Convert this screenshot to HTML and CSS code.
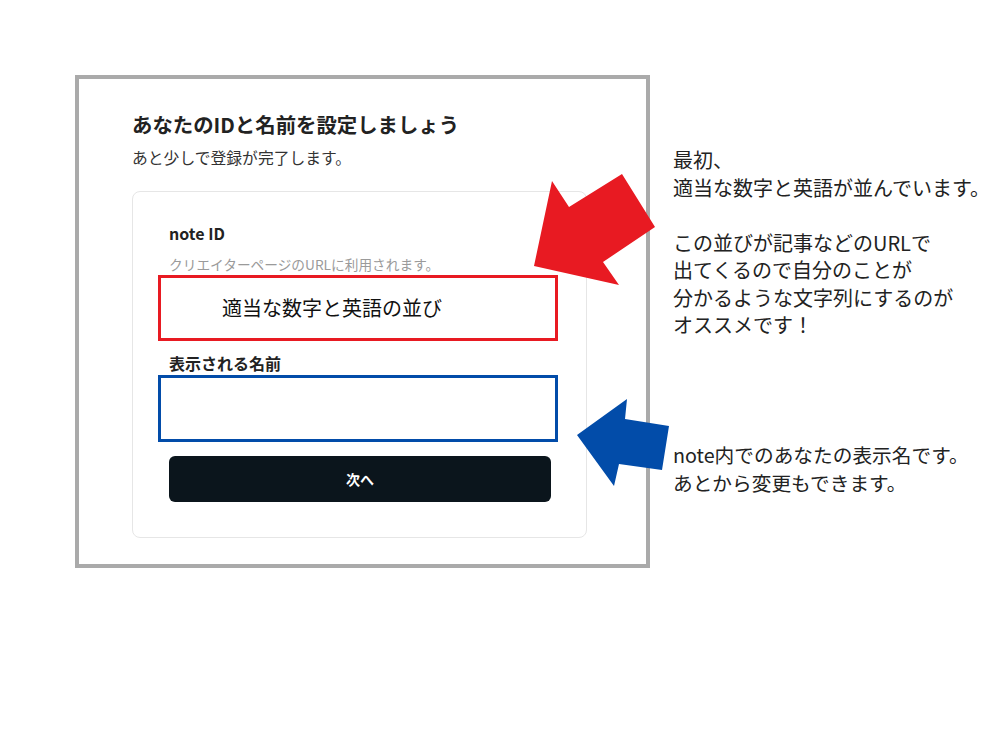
FILE: index.html
```html
<!DOCTYPE html>
<html lang="ja">
<head>
    <meta charset="UTF-8">
    <meta name="viewport" content="width=device-width, initial-scale=1.0">
    <title>note ID と名前の設定</title>
    <link rel="stylesheet" href="styles.css">
</head>
<body>

    <div class="page">
        <div class="shot">
            <h2 class="title">あなたのIDと名前を設定しましょう</h2>
            <p class="lead">あと少しで登録が完了します。</p>

            <div class="card">
                <div class="label">note ID</div>
                <div class="hint">クリエイターページのURLに利用されます。</div>
                <div class="box box-red">適当な数字と英語の並び</div>

                <div class="label label-name">表示される名前</div>
                <div class="box box-blue"></div>

                <button class="next-btn">次へ</button>
            </div>
        </div>

        <div class="notes">
            <p class="note note-id">最初、<br>適当な数字と英語が並んでいます。<br><br>この並びが記事などのURLで<br>出てくるので自分のことが<br>分かるような文字列にするのが<br>オススメです！</p>
            <p class="note note-name">note内でのあなたの表示名です。<br>あとから変更もできます。</p>
        </div>

        <svg class="arrows" width="1000" height="750" viewBox="0 0 1000 750">
            <polygon fill="#e81a22" points="534,266 552,181 569,207 622,174 655,227 603,262 619,285"/>
            <polygon fill="#024ca9" points="577,435 627,399 625,419 669,426 662,470 619,464 614,486"/>
        </svg>
    </div>

</body>
</html>
```

FILE: styles.css
```css
body {
    margin: 0;
    background: white;
    font-family: "Noto Sans CJK JP", "Noto Sans", sans-serif;
    color: #222;
}
.page {
    position: relative;
    width: 1000px;
    height: 750px;
    display: flex;
    align-items: flex-start;
}
.shot {
    box-sizing: border-box;
    width: 575px;
    height: 493px;
    margin: 75px 0 0 75px;
    padding: 30px 0 0 53px;
    border: 4px solid #aaaaaa;
}
.title {
    margin: 0;
    font-size: 20.4px;
    line-height: 30px;
    font-weight: bold;
    color: #222;
}
.lead {
    margin: 8px 0 0;
    font-size: 15.8px;
    line-height: 22px;
    color: #333;
}
.card {
    box-sizing: border-box;
    width: 455px;
    height: 347px;
    margin-top: 22px;
    padding: 31px 35px 0 36px;
    border: 1px solid #e6e6e6;
    border-radius: 8px;
    display: flex;
    flex-direction: column;
}
.label {
    font-size: 16px;
    line-height: 20px;
    font-weight: bold;
    color: #222;
}
.hint {
    margin-top: 11px;
    font-size: 13.7px;
    line-height: 20px;
    color: #9a9a9a;
}
.box {
    box-sizing: border-box;
    margin: 0 -7px 0 -11px;
    background: white;
}
.box-red {
    height: 66px;
    margin-top: 1px;
    padding-left: 61px;
    border: 3px solid #e81a22;
    font-size: 20px;
    line-height: 60px;
    color: #111;
}
.label-name {
    margin-top: 12px;
}
.box-blue {
    height: 67px;
    margin-top: 2px;
    border: 3px solid #024ca9;
}
.next-btn {
    height: 46px;
    margin-top: 14px;
    border: none;
    border-radius: 6px;
    background: #0b151c;
    color: white;
    font-family: inherit;
    font-size: 14px;
    font-weight: bold;
}
.notes {
    margin-left: 23px;
    padding-top: 146px;
}
.note {
    margin: 0;
    color: #222;
    white-space: nowrap;
}
.note-id {
    font-size: 20px;
    line-height: 27.5px;
}
.note-name {
    margin-top: 102px;
    font-size: 19.7px;
    line-height: 28px;
}
.arrows {
    position: absolute;
    left: 0;
    top: 0;
    pointer-events: none;
}
```
